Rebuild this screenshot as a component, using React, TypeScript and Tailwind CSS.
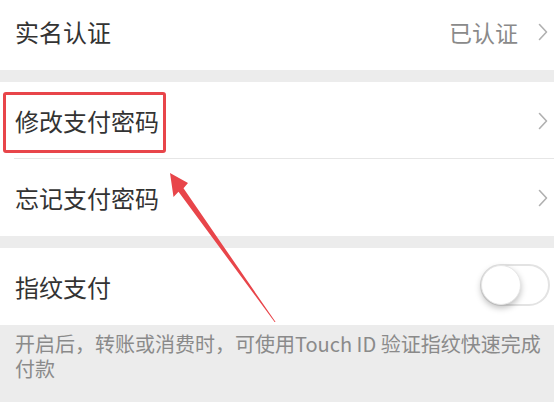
import React from 'react';

const font = { fontFamily: '"Noto Sans CJK SC", "Noto Sans", sans-serif' };

function Chevron() {
  return (
    <svg width="10" height="18" viewBox="0 0 10 18" className="shrink-0">
      <path d="M1.5 1.5 L8.5 9 L1.5 16.5" fill="none" stroke="#b0b0b0" strokeWidth="1.6" strokeLinecap="round" strokeLinejoin="round" />
    </svg>
  );
}

function Row({ label, value, last = true }: { label: string; value?: string; last?: boolean }) {
  return (
    <div className="relative h-[77px] flex items-center bg-white pl-[15px] pr-[6px]">
      <span className="text-[24px] text-[#333] flex-1 leading-none">{label}</span>
      {value && <span className="text-[23px] text-[#8a8a8a] mr-[20px] leading-none">{value}</span>}
      <Chevron />
      {!last && <div className="absolute left-[14px] right-0 bottom-0 h-px bg-[#e6e6e6]" />}
    </div>
  );
}

export default function App() {
  return (
    <div className="relative w-[554px] h-[402px] overflow-hidden bg-[#ececec]" style={font}>
      {/* 实名认证 */}
      <div className="h-[70px] flex items-center bg-white pl-[15px] pr-[6px] pb-[6px]">
        <span className="text-[24px] text-[#333] flex-1 leading-none">实名认证</span>
        <span className="text-[23px] text-[#8a8a8a] mr-[20px] leading-none">已认证</span>
        <Chevron />
      </div>

      <div className="h-[12px]" />

      <Row label="修改支付密码" last={false} />
      <Row label="忘记支付密码" />

      <div className="h-[12px]" />

      {/* 指纹支付 */}
      <div className="h-[77px] flex items-center bg-white pl-[15px] pr-[4px]">
        <span className="text-[24px] text-[#333] flex-1 leading-none">指纹支付</span>
        <div className="relative w-[70px] h-[42px] rounded-full border-2 border-[#e3e3e3] bg-white mb-[4px]">
          <div className="absolute left-[-1px] top-[-1px] w-[40px] h-[40px] rounded-full bg-white shadow-[0_3px_6px_rgba(0,0,0,0.25)] border border-[#e6e6e6]" />
        </div>
      </div>

      {/* 说明 */}
      <div className="pl-[15px] pr-[2px] pt-[6px] text-[20px] leading-[25px] text-[#8a8a8a]">
        开启后，转账或消费时，可使用Touch ID 验证指纹快速完成付款
      </div>

      {/* 标注 */}
      <div className="absolute left-[3px] top-[92px] w-[163px] h-[61px] border-[3px] border-[#e8454a] rounded-[3px]" />
      <svg className="absolute left-0 top-0" width="554" height="402" viewBox="0 0 554 402">
        <polygon points="170,173 188,183 183.5,188.3 275.6,322 274.6,322 178.5,191.7 173.5,197" fill="#e8454a" />
      </svg>
    </div>
  );
}
